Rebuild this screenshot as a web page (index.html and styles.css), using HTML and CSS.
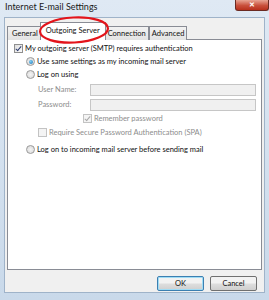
FILE: index.html
```html
<!DOCTYPE html>
<html lang="en">
<head>
  <meta charset="UTF-8">
  <title>Internet E-mail Settings</title>
  <link rel="stylesheet" href="styles.css">
</head>
<body>
  <div class="window">
    <div class="window__title">
      <span class="title__text">Internet E-mail Settings</span>
      <span class="title__close">&#x2715;</span>
    </div>
    <div class="window__client">
      <div class="tabs">
        <span class="tab tab--general">General</span>
        <span class="tab tab--active">Outgoing Server</span>
        <span class="tab tab--narrow">Connection</span>
        <span class="tab tab--narrow">Advanced</span>
      </div>
      <div class="panel">
        <label class="row row--auth"><span class="check check--on"></span>My outgoing server (SMTP) requires authentication</label>
        <label class="row row--lvl1"><span class="radio radio--on"></span>Use same settings as my incoming mail server</label>
        <label class="row row--lvl1"><span class="radio"></span>Log on using</label>
        <div class="field">
          <span class="field__label">User Name:</span>
          <span class="field__input"></span>
        </div>
        <div class="field">
          <span class="field__label">Password:</span>
          <span class="field__input"></span>
        </div>
        <label class="row row--remember row--disabled"><span class="check check--on check--disabled"></span>Remember password</label>
        <label class="row row--lvl2 row--disabled"><span class="check check--disabled"></span>Require Secure Password Authentication (SPA)</label>
        <label class="row row--lvl1 row--last"><span class="radio"></span>Log on to incoming mail server before sending mail</label>
      </div>
      <div class="buttons">
        <span class="btn btn--default">OK</span>
        <span class="btn">Cancel</span>
      </div>
    </div>
    <svg class="mark" width="80" height="32" viewBox="0 0 80 32">
      <ellipse cx="40" cy="16" rx="34" ry="12.5" fill="none" stroke="#e3141b" stroke-width="2.2" transform="rotate(-3 40 16)"/>
    </svg>
  </div>
</body>
</html>
```

FILE: styles.css
```css
body {
  margin: 0;
  font-family: Lato, "Liberation Sans", sans-serif;
  font-size: 7.5px;
  color: #111;
}

.window {
  position: relative;
  width: 269px;
  height: 300px;
  display: flex;
  flex-direction: column;
  background: linear-gradient(#dfe9f4, #c9d9ea);
  padding: 0 4px 7px 4px;
  box-sizing: border-box;
}

.window__title {
  height: 17px;
  display: flex;
  justify-content: space-between;
  align-items: flex-start;
}

.title__text {
  margin: 1px 0 0 1px;
  font-size: 9px;
  color: #1a1a1a;
}

.title__close {
  width: 32px;
  height: 10px;
  margin-right: -4px;
  border: 1px solid #6b2a22;
  border-top: none;
  border-radius: 0 0 3px 3px;
  background: linear-gradient(#e8a493, #c9503c 55%, #b8301c);
  color: #fff;
  font-size: 7px;
  font-weight: bold;
  line-height: 9px;
  text-align: center;
}

.window__client {
  flex: 1;
  display: flex;
  flex-direction: column;
  background: #f0f0f0;
  border: 1px solid #9fb3c9;
  padding: 4px 2px 0 2px;
}

.tabs {
  display: flex;
  align-items: flex-end;
  height: 18px;
  margin-bottom: -1px;
  position: relative;
  z-index: 1;
}

.tab {
  height: 13px;
  padding: 0 3px;
  line-height: 13px;
  border: 1px solid #898c95;
  border-bottom: none;
  margin-right: -1px;
  background: linear-gradient(#f2f2f2, #e3e3e3);
}

.tab--general {
  padding: 0 4px;
}

.tab--narrow {
  padding: 0 2px;
}

.tab--active {
  height: 17px;
  line-height: 15px;
  padding: 0 5px;
  background: #fff;
  margin: 0 -1px 0 -2px;
  position: relative;
}

.tab:last-child {
  margin-left: 1px;
}

.panel {
  height: 231px;
  background: #fff;
  border: 1px solid #898c95;
  padding: 2px 0 0 6px;
  box-sizing: border-box;
}

.row {
  display: flex;
  align-items: center;
  height: 13px;
}

.row--lvl1 {
  margin-left: 12px;
}

.row--lvl2 {
  margin-left: 24px;
  margin-top: 1px;
}

.row--remember {
  margin-left: 69px;
  margin-top: 1px;
}

.row--last {
  margin-top: 4px;
}

.row--disabled {
  color: #8d8d8d;
}

.check {
  width: 7px;
  height: 7px;
  margin-right: 2px;
  border: 1px solid #8f8f8f;
  background: linear-gradient(135deg, #dedede, #fbfbfb);
  position: relative;
}

.check--on::after {
  content: "";
  position: absolute;
  left: 2px;
  top: 0;
  width: 2px;
  height: 5px;
  border: solid #2d3c6e;
  border-width: 0 1.3px 1.3px 0;
  transform: rotate(40deg);
}

.check--disabled {
  border-color: #c3c3c3;
  background: #f4f4f4;
}

.check--disabled::after {
  border-color: #a8a8a8;
}

.radio {
  width: 7px;
  height: 7px;
  margin-right: 2px;
  border: 1px solid #9a9a9a;
  border-radius: 50%;
  background: radial-gradient(#f4f4f4, #d6d6d6);
  position: relative;
}

.radio--on::after {
  content: "";
  position: absolute;
  left: 1.5px;
  top: 1.5px;
  width: 4px;
  height: 4px;
  border-radius: 50%;
  background: radial-gradient(circle at 40% 35%, #7ed0f5, #1a72b8);
}

.field {
  display: flex;
  align-items: center;
  margin: 2px 0 0 24px;
  height: 13px;
}

.field__label {
  width: 52px;
  color: #8d8d8d;
}

.field__input {
  flex: 1;
  height: 10px;
  margin-right: 5px;
  border: 1px solid #c6c6c6;
  background: #f0f0f0;
}

.buttons {
  display: flex;
  justify-content: flex-end;
  gap: 6px;
  padding: 6px 5px 0 0;
}

.btn {
  width: 45px;
  height: 13px;
  line-height: 13px;
  text-align: center;
  border: 1px solid #707070;
  border-radius: 2px;
  background: linear-gradient(#f2f2f2 45%, #dddddd 55%, #cfcfcf);
}

.btn--default {
  border-color: #3c7fb1;
  box-shadow: inset 0 0 0 1px #9fdcf5;
}

.mark {
  position: absolute;
  left: 34px;
  top: 14px;
  z-index: 2;
}
```
